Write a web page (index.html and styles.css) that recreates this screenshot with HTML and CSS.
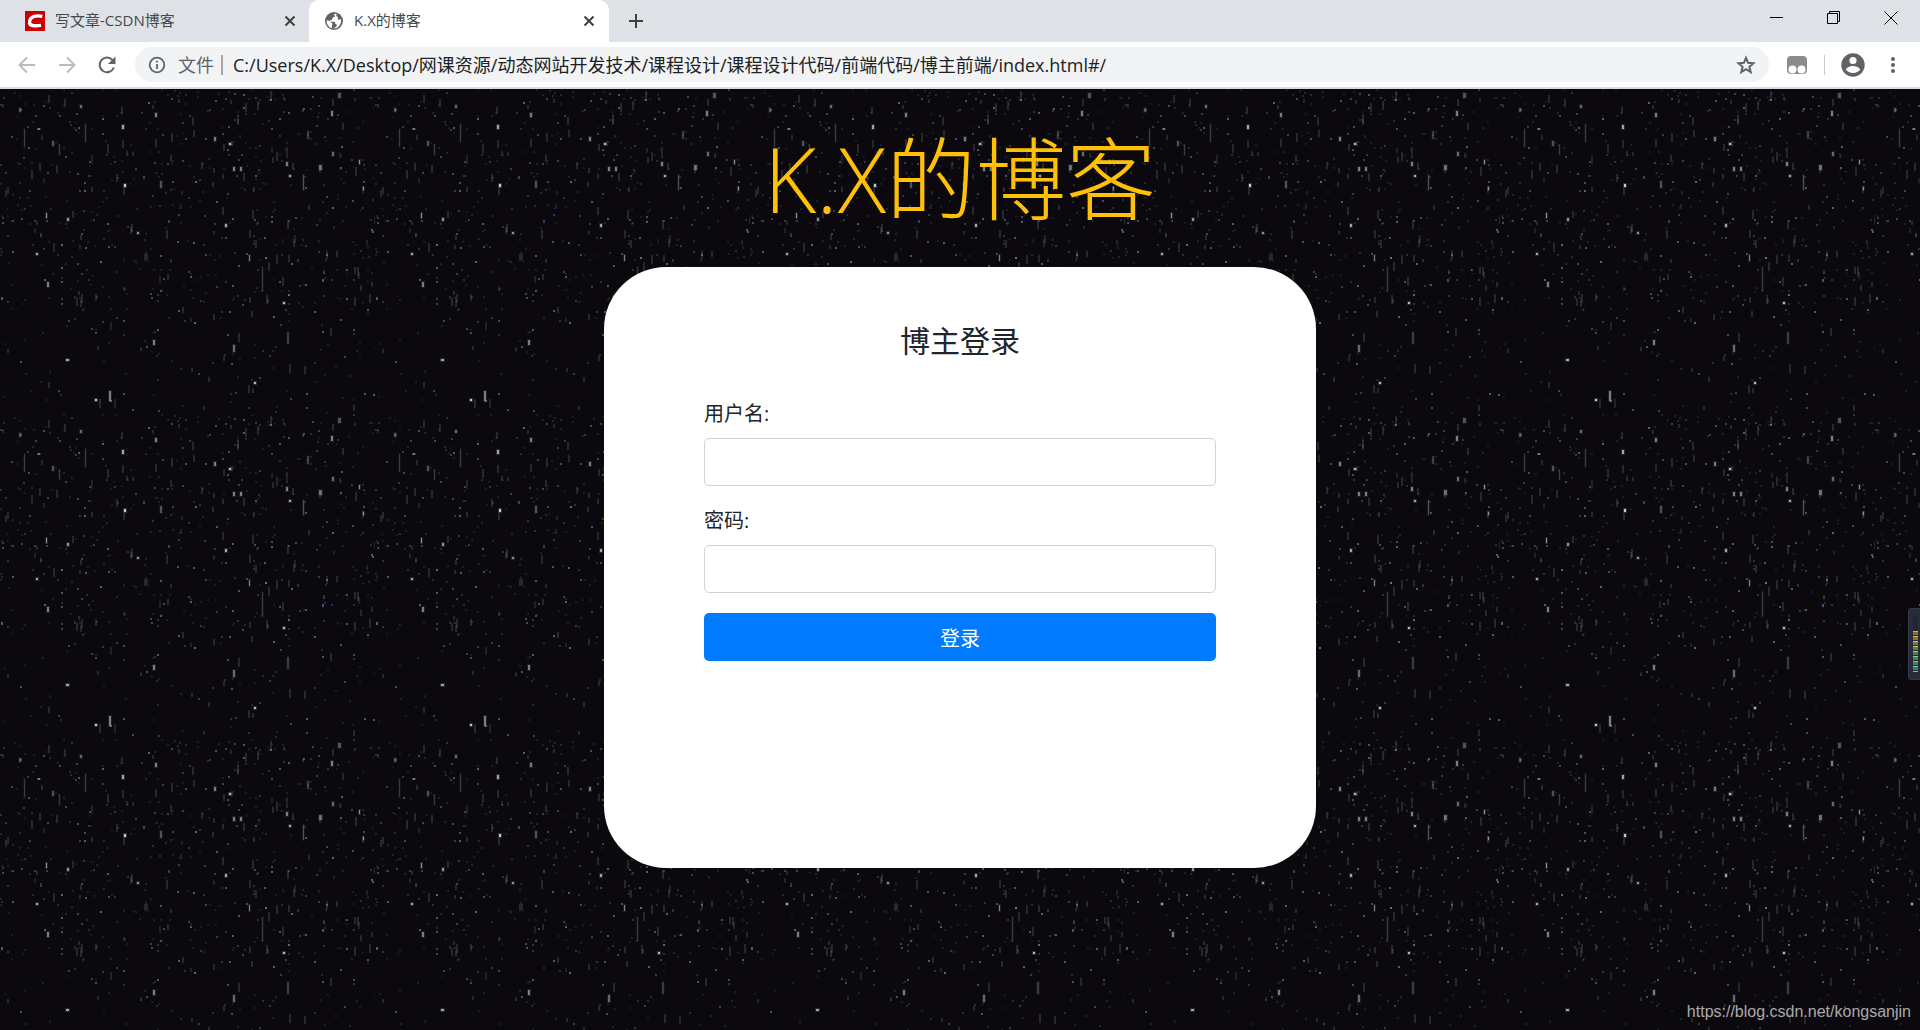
FILE: index.html
```html
<!DOCTYPE html>
<html lang="zh-CN">
<head>
    <meta charset="UTF-8">
    <meta name="viewport" content="width=device-width, initial-scale=1.0">
    <title>K.X的博客</title>
    <link rel="stylesheet" href="styles.css">
</head>
<body>

    <header class="browser">
        <div class="tabs">
            <div class="tab">
                <svg class="favicon" width="20" height="20" viewBox="0 0 20 20">
                    <rect width="20" height="20" fill="#c80000"/>
                    <path d="M17.300 5.300C14 4.700 8.500 4.500 6 7.300 3.600 10.500 4 13.800 7.500 14.500c2.600.5 5.600.3 8.600-.1" fill="none" stroke="#fff" stroke-width="3.400"/>
                </svg>
                <span class="tab-title">写文章-CSDN博客</span>
                <button class="close" aria-label="关闭">
                    <svg width="12" height="12" viewBox="0 0 12 12"><path d="M1.500 1.500l9 9M10.500 1.500l-9 9"/></svg>
                </button>
            </div>
            <div class="tab active">
                <svg class="favicon" width="20" height="20" viewBox="0 0 20 20">
                    <circle cx="10" cy="10" r="9" fill="#5f6368"/>
                    <path d="M11 2.600c-1 .7-1 1.800-.2 2.400-.2 1.200-1.700 1.200-2.500 2-.5.8.2 1.500-.4 2.200H5.700c-.3 1 .2 1.600 1.300 1.600h3.200c1 .2 1.200 1 1 2 .8.500 1.800.500 1.700 1.500-.2 1.300-1.500 2.200-2.900 2.700v.5a7.500 7.500 0 0 0 6.800-9.800c-.8.8-1.800 1.300-2.600.7-.8-.7.3-1.600-.4-2.400-.8-.6-1.400-.3-1.600-1.400-.1-.9.700-1 .9-1.400z" fill="#fff"/>
                    <path d="M2.700 9.200c1.800.2 3.500.9 4.300 2.200.9.4 1.700.9 1.500 1.900-.2.900-.7 1.300-.6 2.300v1.600a7.500 7.500 0 0 1-5.200-8z" fill="#fff"/>
                </svg>
                <span class="tab-title">K.X的博客</span>
                <button class="close" aria-label="关闭">
                    <svg width="12" height="12" viewBox="0 0 12 12"><path d="M1.500 1.500l9 9M10.500 1.500l-9 9"/></svg>
                </button>
            </div>
            <button class="new-tab" aria-label="新标签页">
                <svg width="16" height="16" viewBox="0 0 16 16"><path d="M8 1v14M1 8h14"/></svg>
            </button>
            <div class="window-buttons">
                <button aria-label="最小化"><svg width="14" height="14" viewBox="0 0 14 14"><path d="M0 6.500h13"/></svg></button>
                <button aria-label="还原"><svg width="14" height="14" viewBox="0 0 14 14"><path d="M.5 2.500h10v10h-10zM2.500 2.500v-2h10v10h-2"/></svg></button>
                <button aria-label="关闭窗口"><svg width="14" height="14" viewBox="0 0 14 14"><path d="M.5.500l13 13M13.500.500l-13 13"/></svg></button>
            </div>
        </div>

        <div class="toolbar">
            <button class="nav disabled" aria-label="后退">
                <svg width="20" height="20" viewBox="0 0 20 20"><path d="M18 10H3M10 2.500L2.500 10l7.500 7.500"/></svg>
            </button>
            <button class="nav disabled" aria-label="前进">
                <svg width="20" height="20" viewBox="0 0 20 20"><path d="M2 10h15M10 2.500l7.500 7.500-7.500 7.500"/></svg>
            </button>
            <button class="nav" aria-label="刷新">
                <svg width="20" height="20" viewBox="0 0 20 20"><path d="M16.800 12.500a7.300 7.300 0 1 1-1.500-7.600l2 2"/><path class="fill" d="M18.500 1.500v7.500H11z"/></svg>
            </button>
            <div class="address">
                <svg class="info" width="18" height="18" viewBox="0 0 18 18">
                    <circle cx="9" cy="9" r="7.300" fill="none" stroke="#5f6368" stroke-width="1.800"/>
                    <path d="M9 8v5M9 4.800v1.800" stroke="#5f6368" stroke-width="1.800"/>
                </svg>
                <label for="url">文件</label>
                <input type="text" id="url" value="C:/Users/K.X/Desktop/网课资源/动态网站开发技术/课程设计/课程设计代码/前端代码/博主前端/index.html#/">
                <button class="star" aria-label="收藏">
                    <svg width="20" height="20" viewBox="0 0 20 20"><path d="M10 2.800l2.100 5 5.400.5-4.100 3.500 1.300 5.300-4.700-2.900-4.700 2.900 1.300-5.300-4.100-3.500 5.400-.5z"/></svg>
                </button>
            </div>
            <button class="extension" aria-label="扩展程序">
                <svg width="20" height="20" viewBox="0 0 20 20">
                    <rect x="0" y="1" width="20" height="18" rx="4" fill="#8c8c8c"/>
                    <circle cx="5.500" cy="14.500" r="4" fill="#fff"/>
                    <circle cx="14.500" cy="14.500" r="4" fill="#fff"/>
                </svg>
            </button>
            <span class="divider"></span>
            <button class="profile" aria-label="用户">
                <svg width="24" height="24" viewBox="0 0 24 24">
                    <circle cx="12" cy="12" r="11.700" fill="#5f6368"/>
                    <circle cx="12" cy="7.500" r="3.600" fill="#fff"/>
                    <path d="M4.800 16.500c1-2.300 4.200-3.600 7.200-3.600s6.200 1.300 7.200 3.600c-1.500 2-4.200 3.500-7.200 3.500s-5.700-1.500-7.200-3.500z" fill="#fff"/>
                </svg>
            </button>
            <button class="menu" aria-label="菜单">
                <svg width="20" height="20" viewBox="0 0 20 20" fill="#5f6368"><circle cx="10" cy="4" r="2"/><circle cx="10" cy="10" r="2"/><circle cx="10" cy="16" r="2"/></svg>
            </button>
        </div>
    </header>

    <main class="page">
        <svg class="stars" aria-hidden="true">
            <defs>
                <pattern id="tile" width="375" height="325" patternUnits="userSpaceOnUse"></pattern>
            </defs>
            <rect width="100%" height="100%" fill="url(#tile)"/>
        </svg>

        <h1>K.X的博客</h1>
        <form class="card">
            <h2>博主登录</h2>
            <label for="username">用户名:</label>
            <input type="text" id="username">
            <label for="password">密码:</label>
            <input type="password" id="password">
            <button type="button">登录</button>
        </form>

        <div class="meter"><span class="level"></span></div>
        <a class="watermark" href="#">https://blog.csdn.net/kongsanjin</a>
    </main>

    <script src="stars.js"></script>
</body>
</html>
```

FILE: styles.css
```css
* {
    box-sizing: border-box;
    margin: 0;
    padding: 0;
}
body {
    min-height: 100vh;
    display: flex;
    flex-direction: column;
    font-family: "Open Sans", "Noto Sans CJK SC", sans-serif;
    color: #212529;
}
button {
    border: none;
    background: none;
    font-family: inherit;
}
svg {
    display: block;
    flex: none;
}

/* browser bar */
.browser {
    border-bottom: 2px solid #dadce0;
    background: #fff;
}
.tabs {
    display: flex;
    height: 42px;
    background: #dee1e6;
}
.tab {
    display: flex;
    align-items: center;
    width: 300px;
    padding: 0 14px 0 15px;
    font-size: 15px;
    line-height: 20px;
    color: #45494d;
}
.tab:first-child {
    width: 309px;
    padding: 0 13px 0 25px;
}
.tab.active {
    background: #fff;
    border-radius: 10px 10px 0 0;
}
.tab-title {
    flex: 1;
    margin-left: 10px;
    padding-bottom: 2px;
    white-space: nowrap;
}
.close {
    width: 12px;
    stroke: #3c4043;
    stroke-width: 2;
}
.new-tab {
    margin-left: 19px;
    stroke: #3c4043;
    stroke-width: 2;
}
.window-buttons {
    display: flex;
    margin-left: auto;
    margin-right: 1px;
    height: 36px;
}
.window-buttons button {
    width: 57px;
    display: flex;
    align-items: center;
    justify-content: center;
}
.window-buttons svg {
    fill: none;
    stroke: #000;
}
.toolbar {
    display: flex;
    align-items: center;
    height: 45px;
    padding: 0 16px 0 17px;
}
.nav {
    width: 20px;
    margin-right: 20px;
}
.nav svg {
    fill: none;
    stroke: #5f6368;
    stroke-width: 2;
}
.nav.disabled svg {
    stroke: #babcbe;
}
.nav .fill {
    fill: #5f6368;
    stroke: none;
}
.nav:nth-child(3) {
    margin-right: 18px;
}
.address {
    flex: 1;
    display: flex;
    align-items: center;
    height: 35px;
    padding: 0 13px;
    border-radius: 18px;
    background: #f1f3f4;
    font-size: 18px;
}
.address label {
    margin-left: 12px;
    padding-right: 7px;
    border-right: 2px solid #a5a8ab;
    line-height: 20px;
    color: #5f6368;
}
.address input {
    flex: 1;
    margin-left: 10px;
    padding-bottom: 2px;
    border: none;
    outline: none;
    background: none;
    font-family: inherit;
    font-size: 18px;
    color: #202124;
}
.star svg {
    fill: none;
    stroke: #5f6368;
    stroke-width: 2;
}
.extension {
    margin-left: 18px;
}
.divider {
    width: 1px;
    height: 20px;
    margin: 0 16px 0 17px;
    background: #c8cacd;
}
.menu {
    margin-left: 18px;
    margin-right: 1px;
}

/* login page */
.page {
    flex: 1;
    position: relative;
    padding: 35px 0;
    background: #0b090e;
    overflow: hidden;
}
.stars {
    position: absolute;
    top: 0;
    left: 0;
    width: 100%;
    height: 100%;
}
h1 {
    position: relative;
    font-size: 90px;
    font-weight: 300;
    line-height: 108px;
    text-align: center;
    color: #ffc107;
}
.card {
    position: relative;
    display: flex;
    flex-direction: column;
    width: 712px;
    max-width: 100%;
    min-height: 601px;
    margin: 35px auto 0;
    padding: 56px 100px;
    border-radius: 62px;
    background: #fff;
    font-size: 20px;
}
.card h2 {
    margin-bottom: 40px;
    font-size: 30px;
    font-weight: 400;
    line-height: 36px;
    text-align: center;
}
.card label {
    line-height: 30px;
    margin-bottom: 9px;
}
.card input {
    height: 48px;
    margin-bottom: 20px;
    padding: 8px 15px;
    border: 1px solid #ced4da;
    border-radius: 5px;
    font-size: 20px;
}
.card button {
    height: 48px;
    border-radius: 5px;
    background: #007bff;
    color: #fff;
    font-size: 20px;
}
.meter {
    position: absolute;
    top: 519px;
    right: 0;
    width: 12px;
    height: 72px;
    padding: 7px 2px 7px 4px;
    border: 1px solid #343a4c;
    border-right: none;
    border-radius: 4px 0 0 4px;
    background: #262c3a;
}
.level {
    display: block;
    height: 100%;
    background:
        repeating-linear-gradient(transparent 0 1px, rgba(32, 38, 50, 0.5) 1px 4px, #252b38 4px 5px),
        linear-gradient(#20242e 26%, #f0ac40 26%, #d9cc48 45%, #86d668 70%, #3ddac4);
}
.watermark {
    position: absolute;
    right: 9px;
    bottom: 8px;
    font-family: "Liberation Sans", Arial, sans-serif;
    font-size: 16px;
    line-height: 20px;
    color: #aaa;
    text-decoration: none;
}
```

FILE: stars.js
```js
const tile = document.getElementById("tile");

// x, y, width, height, opacity
const brightStars = [
    [122, 36, 2, 4, 0.7], [124, 95, 2, 3, 0.9], [229, 54, 2, 2, 0.8], [331, 22, 2, 5, 0.5],
    [155, 24, 2, 4, 0.5], [225, 135, 2, 3, 0.7], [67, 129, 2, 3, 0.6], [66, 270, 3, 2, 0.7],
    [109, 302, 2, 10, 0.5], [95, 310, 2, 2, 0.9], [254, 293, 2, 2, 0.8], [153, 251, 2, 5, 0.5],
    [233, 256, 2, 7, 0.4], [47, 193, 2, 5, 0.5], [283, 213, 2, 2, 0.8], [240, 78, 2, 4, 0.5],
    [233, 78, 2, 4, 0.5], [286, 73, 2, 4, 0.5], [289, 86, 2, 2, 0.7], [319, 76, 3, 5, 0.4],
    [359, 71, 1, 4, 0.6], [214, 48, 2, 4, 0.5], [46, 124, 1, 5, 0.6], [137, 143, 2, 2, 0.6],
    [36, 164, 2, 2, 0.7], [249, 166, 1, 6, 0.5], [332, 63, 2, 4, 0.4], [363, 98, 1, 3, 0.6],
    [80, 16, 2, 3, 0.4], [19, 19, 2, 4, 0.3], [52, 52, 2, 5, 0.3], [338, 4, 3, 5, 0.3],
    [307, 42, 2, 8, 0.2], [24, 40, 1, 18, 0.2], [59, 56, 1, 10, 0.2], [85, 35, 1, 18, 0.2],
    [160, 92, 2, 7, 0.3], [303, 86, 1, 15, 0.3], [262, 178, 1, 24, 0.2], [287, 243, 2, 12, 0.2]
];

// fixed seed, the sky stays the same on every load
let seed = 7;
function random() {
    seed = (seed * 16807) % 2147483647;
    return seed / 2147483647;
}

function addRect(x, y, width, height, color, opacity) {
    const rect = document.createElementNS("http://www.w3.org/2000/svg", "rect");
    rect.setAttribute("x", x);
    rect.setAttribute("y", y);
    rect.setAttribute("width", width);
    rect.setAttribute("height", height);
    rect.setAttribute("fill", color);
    rect.setAttribute("opacity", opacity);
    tile.appendChild(rect);
}

// every bright star has a dim glow round it
brightStars.forEach(s => {
    addRect(s[0] - 1, s[1] - 1, s[2] + 2, s[3] + 2, "#6f9097", s[4] * 0.35);
    addRect(s[0], s[1], s[2], s[3], "#cfe0e0", s[4]);
});

for (let i = 0; i < 760; i++) {
    const x = Math.floor(random() * 375);
    const y = Math.floor(random() < 0.5 ? random() * 215 : random() * 325);
    const height = random() < 0.85 ? 2 : 3 + Math.floor(random() * 7);
    const color = random() < 0.15 ? "#5f86cc" : "#8aa5a8";
    const opacity = 0.12 + Math.pow(random(), 3) * 0.5;
    addRect(x, y, 2, height, color, height > 3 ? 0.2 : opacity);
}
```
